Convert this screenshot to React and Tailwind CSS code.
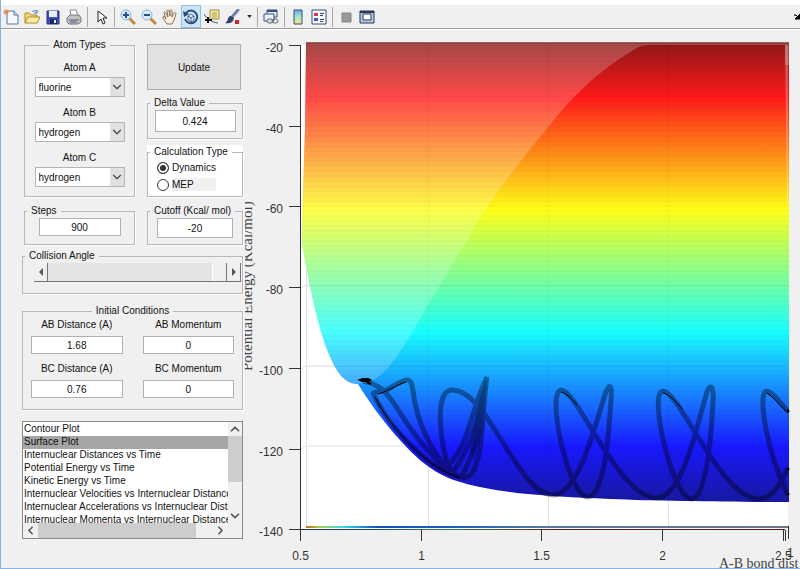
import { useState } from "react";
import { ChevronDown, ChevronUp, ChevronLeft, ChevronRight } from "lucide-react";

const atoms = ["fluorine", "hydrogen", "chlorine", "deuterium"];

const plotTypes = [
    "Contour Plot",
    "Surface Plot",
    "Internuclear Distances vs Time",
    "Potential Energy vs Time",
    "Kinetic Energy vs Time",
    "Internuclear Velocities vs Internuclear Distance",
    "Internuclear Accelerations vs Internuclear Distance",
    "Internuclear Momenta vs Internuclear Distance",
];

const surface = "M306 42.500H789V502C730 502 660 501 610 499S520 495 485 488S440 475 425 464S380 420 358 384C345 384 337 374 328 352S309 287 302 244C302 210 304 160 305 130z";

const nearWall = "M306 42.500H789V65H785V45H650C640 45 637 48 632 51C590 76 564 107 545 131C520 161 493 196 473 230C455 260 440 285 424 312S388 377 370 381L358 384C345 384 337 374 328 352S309 287 302 244C302 210 304 160 305 130z";

// One string per pass of the trajectory
const trajectory = [
    "M363 381C378 384 385 390 395 405S425 454 452 472",
    "M374 395C385 419 405 441 420 454S450 476 462 477",
    "M374 395C371 391 378 393 384 391S400 381 406 380S412 386 413 391C416 420 432 454 450 470C460 480 469 480 474 470C484 448 482 410 487 377",
    "M444 468C462 456 468 430 475 408S485 382 487 377",
    "M454 470C468 452 477 424 481 402S486 382 487 377",
    "M462 475C474 456 481 424 484 400",
    "M450 470C440 445 434 392 451 390C470 389 486 415 500 438C518 466 534 495 554 495C580 493 596 420 606 392C611 380 612 390 611 400C609 430 605 497 587 497C568 495 546 392 561 390C578 390 618 498 657 498C684 496 698 420 707 392C712 380 714 392 713 402C711 440 706 499 691 499C672 497 648 392 663 391C680 391 720 499 760 499C772 498 780 485 788 468",
    "M789 412C782 406 774 392 766 391C758 396 766 450 788 495",
];

const Icon = ({ children }) => (
    <svg className="size-4" viewBox="0 0 16 16" fill="none">{children}</svg>
)

const icons = {
    newFile: <Icon><path d="M4 2h7l4 4v9H4z" fill="#f6faff" stroke="#5677a0" /><path d="M11 2v4h4" fill="#cfe0f2" stroke="#5677a0" /><path d="M3 0v6M0 3h6M1 1l4 4M5 1L1 5" stroke="#e2803c" /></Icon>,
    open: <Icon><path d="M1 14V4h4l2 2h6v2" fill="#f5d76a" stroke="#b08a2a" /><path d="M1 14L4 8h12l-3 6z" fill="#fff0a0" stroke="#b08a2a" /><path d="M8 3c2-2 4-2 5 0M13 1v3h-3" stroke="#3f70a8" /></Icon>,
    save: <Icon><path d="M2 2h12v13H2z" fill="#3a4fb8" stroke="#26358c" /><path d="M4 2h8v6H4z" fill="#e8f0fb" /><path d="M5 10h7v5H5z" fill="#20295c" /><path d="M9 11h2v3H9z" fill="#e8eefa" /></Icon>,
    print: <Icon><path d="M5 8L4 1h6l2 6" fill="#fff" stroke="#8a8f98" /><path d="M1 9l3-3h9l2 3v4l-3 2H3l-2-2z" fill="#bfc2c8" stroke="#70747c" /><path d="M3 11h10M4 13h7" stroke="#555a64" /><path d="M11 9h2" stroke="#e6c84c" /></Icon>,
    arrow: <Icon><path d="M5 2v11l3-3 2 5 2-1-2-5h4z" fill="#fff" stroke="#222" /></Icon>,
    zoomIn: <Icon><path d="M9 9l6 6" stroke="#c88642" strokeWidth="3" /><circle cx="6" cy="6" r="5" fill="#d8ecfb" stroke="#8ab0d4" /><path d="M3 6h6M6 3v6" stroke="#28508c" strokeWidth="2" /></Icon>,
    zoomOut: <Icon><path d="M9 9l6 6" stroke="#c88642" strokeWidth="3" /><circle cx="6" cy="6" r="5" fill="#d8ecfb" stroke="#8ab0d4" /><path d="M3 6h6" stroke="#28508c" strokeWidth="2" /></Icon>,
    hand: <Icon><path d="M5 15L1 9c-1-2 1-2 2-1l1 2-2-6c0-2 2-1 2 0l2 4-1-6c0-2 2-1 2 0l1 5V2c0-2 2-1 2 0v6l2-4c1-1 2 0 2 1l-2 6-2 4z" fill="#fff1e0" stroke="#7c6450" strokeWidth=".9" /></Icon>,
    rotate: <Icon><path d="M3 4a6.300 6.300 0 1 1-1 6" stroke="#294b78" strokeWidth="2" /><path d="M0 2l1 6 5-3z" fill="#294b78" /><path d="M5 7l3-2 3 2v4l-3 2-3-2zM5 7l3 2 3-2M8 9v4" fill="#e4effb" stroke="#294b78" strokeWidth=".8" /></Icon>,
    dataCursor: <Icon><path d="M6 1h9v9H6z" fill="#f5eb9a" stroke="#9a8f4a" /><path d="M8 4h5M8 6h5M8 8h5" stroke="#a8a060" /><path d="M0 5c3 5 7 8 14 9" stroke="#35507c" /><path d="M4 8v6M1 11h7" stroke="#111" strokeWidth="2" /></Icon>,
    brush: <Icon><path d="M13 1L7 8" stroke="#6c84a8" strokeWidth="3" strokeLinecap="round" /><path d="M6 7c-4 0-2 5-6 7 4 1 8 0 9-5z" fill="#35436a" /><path d="M10 11h4v4h-4z" fill="#d4202c" /></Icon>,
    link: <Icon><path d="M4 1h10v7H4z" fill="#e8f1fb" stroke="#34507c" /><path d="M4 2h10" stroke="#34507c" strokeWidth="2" /><path d="M1 5h10v7H1z" fill="#e8f1fb" stroke="#34507c" /><rect x="4" y="10" width="6" height="4" rx="2" fill="#ddd" stroke="#626c78" /><rect x="9" y="10" width="6" height="4" rx="2" stroke="#626c78" /></Icon>,
    colorbar: <Icon><defs><linearGradient id="bar" x2="0" y2="1"><stop stopColor="#70a8e0" /><stop offset=".5" stopColor="#a8e8d0" /><stop offset="1" stopColor="#f8e070" /></linearGradient></defs><path d="M4 1h8v14H4z" fill="url(#bar)" stroke="#34507c" /></Icon>,
    legend: <Icon><path d="M1 1h14v14H1z" fill="#f8fbff" stroke="#34507c" /><path d="M3 4h4v3H3z" fill="#d83c44" /><path d="M3 9h4v3H3z" fill="#3c58c8" /><path d="M9 4.500h4M9 6.500h3M9 10.500h4M9 12.500h3" stroke="#333f58" /></Icon>,
    hideTools: <Icon><path d="M4 4h9v9H4z" fill="#999" stroke="#858585" /></Icon>,
    showTools: <Icon><path d="M1 2h14v12H1z" fill="#b8cce4" stroke="#26395c" /><path d="M1 3h14" stroke="#26395c" strokeWidth="2" /><path d="M4 5h8v6H4z" fill="#fff" stroke="#26395c" /></Icon>,
}

const Tool = ({ label, icon, active }) => (
    <button type="button" aria-label={label} className={active ? "flex h-full w-5 items-center justify-center bg-[#cce4f7] border border-[#90c0e8]" : "flex h-full w-5 items-center justify-center"}>
        {icons[icon]}
    </button>
)

const Separator = () => <span className="mx-0.5 h-5 w-px bg-[#a8a8a8]"></span>

const Toolbar = () => (
    <header className="flex h-6 items-center gap-px border-b border-[#9a9a9a] bg-[#f0f0f0] overflow-hidden">
        <Tool label="New Figure" icon="newFile" />
        <Tool label="Open File" icon="open" />
        <Tool label="Save Figure" icon="save" />
        <Tool label="Print Figure" icon="print" />
        <Separator />
        <Tool label="Edit Plot" icon="arrow" />
        <Separator />
        <Tool label="Zoom In" icon="zoomIn" />
        <Tool label="Zoom Out" icon="zoomOut" />
        <Tool label="Pan" icon="hand" />
        <Tool label="Rotate 3D" icon="rotate" active />
        <Tool label="Data Cursor" icon="dataCursor" />
        <Tool label="Brush" icon="brush" />
        <button type="button" aria-label="Brush colour" className="flex w-2.5 justify-center">
            <svg className="h-[3px] w-[5px]" viewBox="0 0 6 4"><path d="M0 0h6L3 4z" fill="#222" /></svg>
        </button>
        <Separator />
        <Tool label="Link Plot" icon="link" />
        <Separator />
        <Tool label="Insert Colorbar" icon="colorbar" />
        <Tool label="Insert Legend" icon="legend" />
        <Separator />
        <Tool label="Hide Plot Tools" icon="hideTools" />
        <Tool label="Show Plot Tools" icon="showTools" />
        <button type="button" aria-label="Dock Figure" className="ml-auto">
            <svg className="h-2 w-1.5" viewBox="0 0 6 8"><path d="M0 2h2l2 2M6 1v5H1z" stroke="#000" fill="#000" /></svg>
        </button>
    </header>
)

const Group = ({ title, className, legendClass = "ml-0.5", children }) => (
    <fieldset className={`min-w-0 border border-[#b8b8b8] shadow-[1px_1px_0_#fff] ${className}`}>
        <legend className={`px-1 leading-[14px] ${legendClass}`}>{title}</legend>
        {children}
    </fieldset>
)

const AtomSelect = ({ id, label, initial }) => (
    <div className="flex flex-col items-center gap-0.5">
        <label htmlFor={id} className="leading-[14px]">{label}</label>
        <div className="relative">
            <select id={id} defaultValue={initial} className="block h-5 w-[90px] appearance-none border border-[#b4b4b4] bg-white pl-[3px]">
                {atoms.map((atom) => <option key={atom}>{atom}</option>)}
            </select>
            <span className="pointer-events-none absolute inset-y-px right-px flex w-3.5 items-center justify-center bg-[#e1e1e1]">
                <ChevronDown size={14} strokeWidth={2} color="#444" />
            </span>
        </div>
    </div>
)

const NumberBox = ({ className, ...rest }) => (
    <input type="text" className={`block border border-[#b0b0b0] bg-white text-center ${className}`} {...rest} />
)

const Condition = ({ id, label, value }) => (
    <div className="flex flex-col gap-1">
        <label htmlFor={id} className="text-center leading-[14px]">{label}</label>
        <NumberBox id={id} defaultValue={value} className="h-[18px] w-full" />
    </div>
)

const PlotList = () => {

    const [plot, setPlot] = useState("Surface Plot");

    return (
        <div className="mt-[11px] border border-[#8a8a8a] bg-[#f0f0f0]">
            <div className="flex h-[101px] bg-white">
                <select size={8} aria-label="Plot type" value={plot} onChange={(e) => setPlot(e.target.value)} className="mt-px h-[100px] min-w-0 flex-1 overflow-hidden bg-white p-0">
                    {plotTypes.map((type) => (
                        <option key={type} className="h-[13px] min-h-0 overflow-hidden p-0 pl-px leading-[13px] text-[#111] checked:bg-[linear-gradient(#a6a6a6,#a6a6a6)]">{type}</option>
                    ))}
                </select>
                <div className="flex w-3.5 flex-col items-center justify-between bg-[#f0f0f0]">
                    <button type="button" aria-label="Scroll up"><ChevronUp size={14} strokeWidth={3} color="#555" /></button>
                    <span className="mb-auto h-[46px] w-3.5 bg-[#cdcdcd]"></span>
                    <button type="button" aria-label="Scroll down"><ChevronDown size={14} strokeWidth={3} color="#555" /></button>
                </div>
            </div>
            <div className="flex h-[15px] items-center pr-3.5">
                <button type="button" aria-label="Scroll left" className="px-px"><ChevronLeft size={13} strokeWidth={3} color="#555" /></button>
                <span className="h-full w-[158px] bg-[#cdcdcd]"></span>
                <button type="button" aria-label="Scroll right" className="ml-auto px-px"><ChevronRight size={13} strokeWidth={3} color="#555" /></button>
            </div>
        </div>
    )
}

const Controls = () => {

    const [calcType, setCalcType] = useState("Dynamics");

    return (
        <aside className="w-[221px] shrink-0 pt-2">
            <div className="flex gap-3 pl-0.5">
                <Group title="Atom Types" className="w-[111px]" legendClass="mx-auto">
                    <div className="flex flex-col gap-[9px] pt-[9px] pb-2">
                        <AtomSelect id="atomA" label="Atom A" initial="fluorine" />
                        <AtomSelect id="atomB" label="Atom B" initial="hydrogen" />
                        <AtomSelect id="atomC" label="Atom C" initial="hydrogen" />
                    </div>
                </Group>
                <div className="flex flex-1 flex-col gap-1.5 pt-1.5">
                    <button type="button" className="mr-0.5 h-[46px] border border-[#adadad] bg-[#e1e1e1]">Update</button>
                    <Group title="Delta Value" className="h-[43px]">
                        <NumberBox aria-label="Delta Value" defaultValue="0.424" className="mx-auto h-[22px] w-[81px]" />
                    </Group>
                    <div className="bg-white">
                        <Group title="Calculation Type" className="h-[52px]">
                            {["Dynamics", "MEP"].map((type) => (
                                <label key={type} className="flex h-[17px] items-center gap-[3px] pl-[9px]">
                                    <input
                                        type="radio"
                                        name="calcType"
                                        checked={calcType === type}
                                        onChange={() => setCalcType(type)}
                                        className="size-3 appearance-none rounded-full border border-[#333] bg-white checked:bg-[#333] checked:shadow-[inset_0_0_0_2px_#fff]"
                                    />
                                    <span className={type === "MEP" ? "w-11 bg-[#f0f0f0] leading-[13px]" : "leading-[13px]"}>{type}</span>
                                </label>
                            ))}
                        </Group>
                    </div>
                </div>
            </div>

            <div className="mt-[7px] flex gap-3 pl-0.5">
                <Group title="Steps" className="h-[41px] w-[111px]">
                    <NumberBox aria-label="Steps" defaultValue="900" className="mx-auto h-[18px] w-[82px]" />
                </Group>
                <Group title="Cutoff (Kcal/ mol)" className="h-[41px] flex-1">
                    <NumberBox aria-label="Cutoff" defaultValue="-20" className="mx-auto h-5 w-[76px]" />
                </Group>
            </div>

            <Group title="Collision Angle" className="mt-1 h-[45px]">
                <div className="ml-[11px] mr-px flex h-[19px] border-b border-[#777] bg-[#e4e4e4]">
                    <button type="button" aria-label="Decrease angle" className="flex w-3.5 items-center justify-center border-r border-[#777] bg-[#f0f0f0]">
                        <svg className="h-2 w-1" viewBox="0 0 4 8"><path d="M4 0v8L0 4z" fill="#555" /></svg>
                    </button>
                    <input
                        type="range"
                        aria-label="Collision Angle"
                        min="0"
                        max="180"
                        defaultValue="180"
                        className="h-full min-w-0 flex-1 appearance-none bg-transparent [&::-webkit-slider-thumb]:h-[18px] [&::-webkit-slider-thumb]:w-[15px] [&::-webkit-slider-thumb]:appearance-none [&::-webkit-slider-thumb]:border-r [&::-webkit-slider-thumb]:border-l [&::-webkit-slider-thumb]:border-r-[#777] [&::-webkit-slider-thumb]:border-l-white [&::-webkit-slider-thumb]:bg-[#f0f0f0]"
                    />
                    <button type="button" aria-label="Increase angle" className="flex w-3.5 items-center justify-center border-r border-[#777] bg-[#f0f0f0]">
                        <svg className="h-2 w-1" viewBox="0 0 4 8"><path d="M0 0v8l4-4z" fill="#555" /></svg>
                    </button>
                </div>
            </Group>

            <Group title="Initial Conditions" className="mt-2.5 h-[106px]" legendClass="mx-auto">
                <div className="grid grid-cols-2 gap-x-5 gap-y-2 px-2">
                    <Condition id="abDistance" label="AB Distance (A)" value="1.68" />
                    <Condition id="abMomentum" label="AB Momentum" value="0" />
                    <Condition id="bcDistance" label="BC Distance (A)" value="0.76" />
                    <Condition id="bcMomentum" label="BC Momentum" value="0" />
                </div>
            </Group>

            <PlotList />
        </aside>
    )
}

const SurfacePlot = () => {

    const yTicks = [-20, -40, -60, -80, -100, -120, -140];
    const xTicks = [0.5, 1, 1.5, 2];

    return (
        <svg className="block h-auto min-w-0 flex-1" viewBox="245 30 555 538" role="img" aria-label="Potential energy surface">
            <defs>
                <linearGradient id="jet" gradientUnits="userSpaceOnUse" x1="0" y1="42" x2="0" y2="502">
                    <stop offset="0" stopColor="#8c1818" />
                    <stop offset=".12" stopColor="#ff1818" />
                    <stop offset=".365" stopColor="#ffff18" />
                    <stop offset=".63" stopColor="#18ffff" />
                    <stop offset=".88" stopColor="#1818ff" />
                    <stop offset="1" stopColor="#1818a0" />
                </linearGradient>
                <linearGradient id="floorBack">
                    <stop offset="0" stopColor="#c86420" />
                    <stop offset=".03" stopColor="#a0d850" />
                    <stop offset=".08" stopColor="#30d8e8" />
                    <stop offset=".15" stopColor="#1050c0" />
                    <stop offset=".3" stopColor="#1860c0" />
                    <stop offset=".5" stopColor="#5878a0" />
                    <stop offset="1" stopColor="#687888" />
                </linearGradient>
                <linearGradient id="floorFront">
                    <stop offset="0" stopColor="#303030" />
                    <stop offset=".17" stopColor="#104878" />
                    <stop offset=".28" stopColor="#207860" />
                    <stop offset=".45" stopColor="#505020" />
                    <stop offset=".55" stopColor="#601818" />
                    <stop offset="1" stopColor="#681010" />
                </linearGradient>
                <pattern id="bands" width="10" height="5" patternUnits="userSpaceOnUse">
                    <path d="M0 0h10v2H0z" fill="#000" opacity=".018" />
                </pattern>
                <clipPath id="plotArea"><path d="M301 42h488v488H301z" /></clipPath>
            </defs>

            {/* back wall and grid */}
            <path d="M301 45h487v484H301z" fill="#fff" />
            <path d="M428.500 45v482M548.500 45v482M668.500 45v482M306.500 45v482M301 288l5-3h482M301 369l5-3h482M301 449l5-3h482" stroke="#e2e2e2" fill="none" />

            {/* energy surface */}
            <path d={surface} fill="url(#jet)" />
            <path d={nearWall} fill="#fff" opacity=".21" />
            <path d="M785 45h3v160h-1z" fill="#fff" opacity=".25" />
            <path d={surface} fill="url(#bands)" />
            <path d="M428.500 43v421M548.500 43v453M668.500 43v457M306 285.500h482M306 366.500h482" stroke="#000" opacity=".04" />
            <path d="M306 43h483" stroke="#703838" />

            {/* trajectory */}
            <g clipPath="url(#plotArea)" fill="none" strokeLinejoin="round">
                <path d={trajectory.join("")} stroke="#000008" strokeWidth="5" opacity=".38" />
                <path d="M487 377L480 396L474 425L470 448L474 462L483 430z" fill="#000818" opacity=".25" />
                <path d="M375 397C386 419 405 441 420 454S445 472 460 478M378 394C384 393 398 384 406 382M561 392C566 393 572 399 577 405M663 393C668 394 676 401 682 409M767 393C772 396 778 403 786 411" stroke="#000" />
            </g>
            <path d="M360 380l3-1h5l2 1-2 1h-6zM367 382l4 2" fill="#000" stroke="#000" strokeWidth="2" />
            <circle cx="788" cy="411" r="1.500" />
            <circle cx="788" cy="469" r="1.500" />
            <circle cx="788" cy="494" r="1.500" />

            {/* surface floor seen edge-on */}
            <path d="M306 526h483v2H306z" fill="url(#floorBack)" />
            <path d="M289 529h496v1H289z" fill="url(#floorFront)" />

            {/* axes */}
            <path d="M300.500 45v485M783.500 530v11M785.500 530v11M788.500 526v13" stroke="#333" />
            <g fontFamily="Liberation Sans, Arial, sans-serif" fontSize="12" fill="#333">
                {yTicks.map((tick, i) => {
                    const y = Math.round(45 + i * 80.7) + 0.5;
                    return (
                        <g key={tick}>
                            <path d={`M289 ${y}h12`} stroke="#333" />
                            <text x="283" y={y + 6} textAnchor="end">{tick}</text>
                        </g>
                    )
                })}
                {xTicks.map((tick, i) => {
                    const x = Math.round(300 + i * 120.5) + 0.5;
                    return (
                        <g key={tick}>
                            <path d={`M${x} 530v11`} stroke="#333" />
                            <text x={x} y="560" textAnchor="middle">{tick}</text>
                        </g>
                    )
                })}
                <text x="775" y="560">2.5</text>
                <text x="787" y="557">1</text>
            </g>
            <g fontFamily="Liberation Serif, Times New Roman, serif" fill="#444">
                <text x="719" y="568" fontSize="14">A-B bond dist</text>
                <text transform="translate(252 371) rotate(-90)" fontSize="15">Potential Energy (Kcal/mol)</text>
            </g>
        </svg>
    )
}

const App = () => {
    return (
        <div className="min-h-screen border-b border-l border-[#8ab4e0] bg-[#f0f0f0] font-['Liberation_Sans',Arial,sans-serif] text-[10px] text-[#111]">
            <div className="h-[5px] bg-white"></div>
            <Toolbar />
            <main className="flex gap-0.5 border-t border-white pl-[21px]">
                <Controls />
                <SurfacePlot />
            </main>
        </div>
    )
}

export default App;
